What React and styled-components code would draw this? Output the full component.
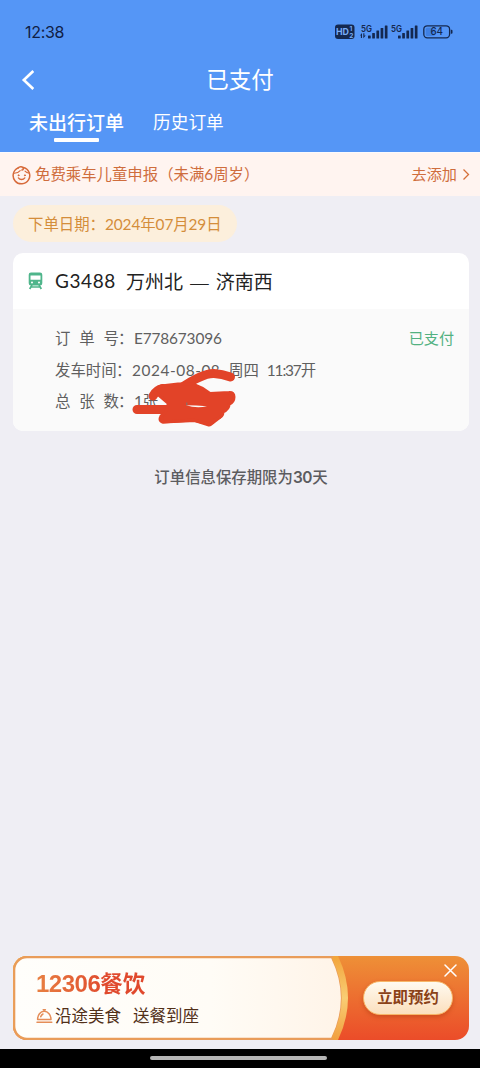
import React from 'react';
import styled, { createGlobalStyle } from 'styled-components';

const GlobalStyle = createGlobalStyle`
  * {
    box-sizing: border-box;
  }

  body {
    margin: 0;
    background: #efeef4;
    font-family: Lato, "Noto Sans CJK SC", sans-serif;
  }

  svg {
    display: block;
    flex: none;
  }
`;

const orders = [
  {
    id: 'E778673096',
    train: 'G3488',
    from: '万州北',
    to: '济南西',
    status: '已支付',
    date: '2024-08-08',
    weekday: '周四',
    time: '11:37',
    count: '1张',
  },
];

const SignalIcon = ({ roaming }) => (
  <svg width="29" height="16" viewBox="0 0 29 16" fill="#14284f">
    <text x="1" y="7.6" fontSize="9" fontWeight="600" fontFamily="Inter" textLength="11" lengthAdjust="spacingAndGlyphs">5G</text>
    {roaming && <path d="M0 11.5 2 9v5H.9v-2.500H0zM3.300 9.200h1.100v2.300h1.400L3.300 14.300z" />}
    <rect x="8" y="11.500" width="2.700" height="3" rx=".5" />
    <rect x="12.200" y="9" width="2.700" height="5.500" rx=".5" />
    <rect x="16.400" y="6.500" width="2.700" height="8" rx=".5" />
    <rect x="20.600" y="4" width="2.700" height="10.500" rx=".5" />
    <rect x="24.800" y="1.500" width="2.700" height="13" rx=".5" />
  </svg>
);

const HdIcon = () => (
  <svg width="20" height="16" viewBox="0 0 20 16">
    <rect x="0" y=".5" width="19.500" height="14.500" rx="3" fill="#14284f" />
    <g fill="#78adf8" fontFamily="Inter" fontWeight="700">
      <text x="1" y="11.200" fontSize="9.500" textLength="13" lengthAdjust="spacingAndGlyphs">HD</text>
      <text x="14.500" y="7.100" fontSize="6.500">1</text>
      <text x="14.300" y="13.500" fontSize="6.500">2</text>
    </g>
  </svg>
);

const BatteryIcon = () => (
  <svg width="31" height="14" viewBox="0 0 31 14">
    <rect x="2.800" y="2.800" width="9" height="8.200" rx="1.500" fill="#3f80e4" />
    <rect x=".8" y=".8" width="25.800" height="12" rx="3.500" fill="none" stroke="#14284f" strokeWidth="1.300" />
    <path d="M27.800 4.800h.7q1 0 1 1v2q0 1-1 1h-.7z" fill="#14284f" />
    <text x="13.700" y="10.400" textAnchor="middle" fontSize="9.800" fontWeight="500" fontFamily="Inter" fill="#14284f">64</text>
  </svg>
);

const ChildIcon = () => (
  <svg width="20" height="20" viewBox="0 0 20 20" fill="none" stroke="#d76a3a" strokeWidth="1.500" strokeLinecap="round">
    <path d="M6.200 2.900A8.300 8.300 0 1 0 11.500 2.500" />
    <path d="M6.200 2.900C7.500 1.600 9.800 1.400 10.800 2.400c1 1.100.4 2.700-.9 2.700" />
    <path d="M2.300 8.200C5 8.100 7 7.200 8.200 5.700M13 6.200c.9 1.100 2.300 1.800 4.400 2" strokeWidth="1.100" />
    <path d="M6.400 12.900c1.500 2.100 4.900 2.100 6.400 0" strokeWidth="1.300" />
    <circle cx="6.500" cy="10.300" r=".5" fill="#d76a3a" strokeWidth="1" />
    <circle cx="12.900" cy="10.300" r=".5" fill="#d76a3a" strokeWidth="1" />
  </svg>
);

const TrainIcon = () => (
  <svg width="15" height="18" viewBox="0 0 15 18">
    <path fillRule="evenodd" fill="#4fb58b" d="M3 .5h9A2.300 2.300 0 0 1 14.300 2.800v8.400a2.300 2.300 0 0 1-2.300 2.300H3A2.300 2.300 0 0 1 .7 11.200V2.800A2.300 2.300 0 0 1 3 .5zM2.500 3.500v4.300h10V3.500zM4 9.500a1 1 0 1 0 0 2 1 1 0 0 0 0-2zm7 0a1 1 0 1 0 0 2 1 1 0 0 0 0-2z" />
    <path d="M4 13 1.700 17M11 13l2.300 4M3.500 15h8" stroke="#4fb58b" strokeWidth="1.700" />
  </svg>
);

const DishIcon = () => (
  <svg width="17" height="16" viewBox="0 0 17 16" fill="none" stroke="#e58d58" strokeWidth="1.500" strokeLinecap="round" strokeLinejoin="round">
    <path d="M1.600 11.500C1.600 7 4.300 3.300 8.200 3.300s6.800 3.700 6.800 8.200zM1 14.200h14.800M7.200 1.700h2.200M4.700 8.700c.5-1.400 1.300-2.200 2.300-2.700" />
  </svg>
);

// marker strokes that cover the passenger details
const Scribble = () => (
  <ScribbleSvg width="106" height="62" viewBox="131 367 106 62">
    <g fill="none" stroke="#e24328" strokeWidth="9" strokeLinecap="round" strokeLinejoin="round">
      <path d="M181 388Q203 373 214 373.500Q222 374 230.500 377" />
      <path d="M153 396Q156 390 163 388.500" />
      <path d="M137 409.500H170M163 419 195 417.500 209 422 218 415" />
    </g>
    <path
      fill="#e24328"
      stroke="#e24328"
      strokeWidth="3"
      strokeLinejoin="round"
      d="M154 391 161 386 178 384 193 384 202 388 210 393.500 229 392.500Q234 392 234 397 234 402 229 404.500 229 409 223 412 223 417 217 418.500L209 424 193 420 163 422 161 416 165 413 168 406 168 403 161 397Z"
    />
    <path fill="#fafafa" d="M186 405.200Q196 408.500 207 406.300Q196 405.300 186 405.200Z" />
    <path fill="#777" d="M186.300 402.500h1v2.800h-1z" />
  </ScribbleSvg>
);

const BannerArt = () => (
  <BannerSvg width="456" height="84" viewBox="0 0 456 84">
    <defs>
      <linearGradient id="orange" x1="0" y1="0" x2="0" y2="1">
        <stop offset="0" stopColor="#ee9037" />
        <stop offset="1" stopColor="#eb4c29" />
      </linearGradient>
      <linearGradient id="cream" x1="0" y1="0" x2="1" y2="0">
        <stop offset="0" stopColor="#fffefb" />
        <stop offset=".6" stopColor="#fffcf6" />
        <stop offset="1" stopColor="#fff4e8" />
      </linearGradient>
      <linearGradient id="rim" x1="0" y1="0" x2="0" y2="1">
        <stop offset="0" stopColor="#f2a53c" />
        <stop offset=".5" stopColor="#f9cd74" />
        <stop offset="1" stopColor="#f1a03f" />
      </linearGradient>
    </defs>
    <rect width="456" height="84" rx="14" fill="url(#orange)" />
    <path d="M14 0H325Q345 42 325 84H14A14 14 0 0 1 0 70V14A14 14 0 0 1 14 0Z" fill="url(#rim)" />
    <path d="M14 1.200H319Q339 42 319 82.800H14A12.800 12.800 0 0 1 1.200 70V14A12.800 12.800 0 0 1 14 1.200Z" fill="url(#cream)" stroke="#e99c59" strokeWidth="2.200" />
    <path d="M320.500 1Q341 42 320.500 83" fill="none" stroke="url(#rim)" strokeWidth="4" />
  </BannerSvg>
);

const OrderCard = ({ order }) => (
  <Card>
    <CardHeader>
      <TrainIcon />
      <TrainNumber>{order.train}</TrainNumber>
      <Route>
        <span>{order.from}</span>
        <Dash>—</Dash>
        <span>{order.to}</span>
      </Route>
    </CardHeader>
    <CardBody>
      <Row>
        <Label $spread><i>订</i><i>单</i><i>号</i></Label>
        <Colon />
        <Value>{order.id}</Value>
        <Status>{order.status}</Status>
      </Row>
      <Row>
        <Label>发车时间</Label>
        <Colon />
        <Value $spacing={0.550}>{order.date}</Value>
        <Value>{order.weekday}</Value>
        <Value $spacing={-1.150}>{order.time}</Value>
        <span>开</span>
      </Row>
      <Row>
        <Label $spread><i>总</i><i>张</i><i>数</i></Label>
        <Colon />
        <Value>{order.count}</Value>
      </Row>
      <Scribble />
    </CardBody>
  </Card>
);

const App = () => (
  <Page>
    <GlobalStyle />
    <Header>
      <StatusBar>
        <Time>12:38</Time>
        <StatusIcons>
          <HdIcon />
          <SignalIcon roaming />
          <SignalIcon />
          <BatteryIcon />
        </StatusIcons>
      </StatusBar>
      <TitleBar>
        <svg width="14" height="20" viewBox="0 0 14 20" fill="none" stroke="#fff" strokeWidth="2.600">
          <path d="M13.300 1 3.800 10l9.500 9" />
        </svg>
        <Title>已支付</Title>
      </TitleBar>
      <Tabs>
        <Tab $active>未出行订单</Tab>
        <Tab>历史订单</Tab>
      </Tabs>
    </Header>

    <Notice>
      <ChildIcon />
      <NoticeText>免费乘车儿童申报（未满6周岁）</NoticeText>
      <NoticeLink>去添加</NoticeLink>
      <svg width="8" height="12" viewBox="0 0 8 12" fill="none" stroke="#d5703a" strokeWidth="1.300">
        <path d="M1.500 .5 6.500 5.500l-5 5" />
      </svg>
    </Notice>

    <Content>
      <DatePill>下单日期：<span>2024年07月29日</span></DatePill>
      {orders.map(order => <OrderCard key={order.id} order={order} />)}
      <Hint>订单信息保存期限为<b>30</b>天</Hint>
    </Content>

    <Banner>
      <BannerArt />
      <BannerText>
        <BannerTitle><span>12306</span>餐饮</BannerTitle>
        <BannerSub>
          <DishIcon />
          <span>沿途美食</span>
          <span>送餐到座</span>
        </BannerSub>
      </BannerText>
      <BookButton>立即预约</BookButton>
      <Close width="13" height="13" viewBox="0 0 13 13" stroke="#fff" strokeWidth="1.500" strokeLinecap="round">
        <path d="M1 1l11 11M12 1 1 12" />
      </Close>
    </Banner>

    <NavBar><HomeIndicator /></NavBar>
  </Page>
);

const Page = styled.div`
  display: flex;
  flex-direction: column;
  width: 480px;
  height: 1068px;
  overflow: hidden;
  background: #efeef4;
`;

const Header = styled.header`
  height: 152px;
  background: #5596f6;
  color: #fff;
`;

const StatusBar = styled.div`
  display: flex;
  align-items: center;
  justify-content: space-between;
  height: 64px;
  padding: 0 26px 0 25px;
`;

const Time = styled.span`
  font-family: Inter, sans-serif;
  font-size: 16px;
  font-weight: 400;
  letter-spacing: -0.300px;
  color: #102045;
`;

const StatusIcons = styled.div`
  display: flex;
  align-items: center;

  & > :first-child {
    margin-right: 5px;
  }

  & > :last-child {
    margin-left: 4px;
  }

  & > :nth-child(3) {
    margin-left: 1px;
  }
`;

const TitleBar = styled.div`
  display: flex;
  align-items: center;
  height: 32px;
  padding: 0 20px;
`;

const Title = styled.h1`
  flex: 1;
  margin: 0 14px 0 0;
  text-align: center;
  font-size: 22.500px;
  line-height: 32px;
  font-weight: 400;
`;

const Tabs = styled.nav`
  display: flex;
  align-items: flex-start;
  gap: 29px;
  padding: 12px 29px 0;
`;

const Tab = styled.div`
  display: flex;
  flex-direction: column;
  align-items: center;
  line-height: 30px;
  font-size: ${props => (props.$active ? 19 : 17.700)}px;
  font-weight: ${props => (props.$active ? 500 : 400)};

  &::after {
    content: '';
    display: ${props => (props.$active ? 'block' : 'none')};
    width: 45px;
    height: 4px;
    border-radius: 1px;
    background: #fff;
  }
`;

const Notice = styled.div`
  display: flex;
  align-items: center;
  height: 44px;
  padding: 0 10px 0 12px;
  border-top: 1px solid #fbfafd;
  background: #fff4f0;
  color: #cf6d3d;
  font-size: 15.400px;
  line-height: 24px;

  & > :last-child {
    margin-left: 5px;
  }
`;

const NoticeText = styled.span`
  flex: 1;
  margin-left: 3px;
  padding-bottom: 2px;
`;

const NoticeLink = styled.span`
  padding-bottom: 2px;
  font-size: 15.200px;
`;

const Content = styled.main`
  display: flex;
  flex: 1;
  flex-direction: column;
  align-items: stretch;
  padding: 9px 11px 0 13px;
`;

const DatePill = styled.div`
  align-self: flex-start;
  width: 224px;
  height: 37px;
  padding-left: 15px;
  border-radius: 19px;
  background: #fcefdc;
  color: #d48d3a;
  font-size: 15.400px;
  line-height: 38px;
  white-space: nowrap;

  span {
    letter-spacing: -0.1px;
  }
`;

const Card = styled.section`
  margin-top: 11px;
  overflow: hidden;
  border-radius: 10px;
  background: #fff;
`;

const CardHeader = styled.div`
  display: flex;
  align-items: center;
  height: 56px;
  padding: 0 0 0 15px;
  color: #222;
  font-size: 19px;
  line-height: 28px;
`;

const TrainNumber = styled.span`
  width: 71px;
  margin-left: 12px;
  letter-spacing: 0.600px;
`;

const Route = styled.span`
  display: flex;
  gap: 6px;
  font-family: "Noto Sans CJK SC", sans-serif;
`;

const Dash = styled.span`
  font-size: 23.500px;
  font-weight: 300;
`;

const CardBody = styled.div`
  position: relative;
  height: 122px;
  padding: 14px 15px 0 42px;
  background: #fafafa;
  color: #5f5f5f;
`;

const Row = styled.div`
  display: flex;
  height: 31.500px;
  font-size: 15.400px;
  line-height: 31px;
`;

const Label = styled.div`
  display: flex;
  justify-content: space-between;
  width: ${props => (props.$spread ? 64 : 62)}px;
  white-space: nowrap;

  i {
    font-style: normal;
  }
`;

const Colon = styled.span`
  width: 15px;

  &::before {
    content: '：';
    margin-left: -1px;
  }
`;

const Value = styled.span`
  letter-spacing: ${props => props.$spacing || -0.150}px;

  & + & {
    margin-left: 8px;
  }
`;

const Status = styled.span`
  margin-left: auto;
  color: #52b181;
  font-size: 15.100px;
`;

const ScribbleSvg = styled.svg`
  position: absolute;
  left: 118px;
  top: 58px;
`;

const Hint = styled.p`
  margin: 35px 0 0;
  color: #5c5c5f;
  font-family: Inter, "Noto Sans CJK SC", sans-serif;
  font-size: 15.400px;
  font-weight: 500;
  line-height: 24px;
  text-align: center;

  b {
    font-weight: 600;
    letter-spacing: -0.300px;
  }
`;

const Banner = styled.aside`
  position: relative;
  display: flex;
  align-items: center;
  justify-content: space-between;
  height: 84px;
  margin: 0 11px 9px 13px;
  padding: 0 16px 0 23px;
`;

const BannerSvg = styled.svg`
  position: absolute;
  left: 0;
  top: 0;
`;

const BannerText = styled.div`
  position: relative;
  padding-top: 2px;
`;

const BannerTitle = styled.div`
  width: max-content;
  background: linear-gradient(90deg, #e88042, #e0492d 65%);
  background-clip: text;
  color: transparent;
  font-family: "Liberation Sans", "Noto Sans CJK SC", sans-serif;
  font-size: 22.500px;
  font-weight: 700;
  line-height: 32px;

  span {
    font-size: 24px;
    letter-spacing: -0.500px;
  }
`;

const BannerSub = styled.div`
  display: flex;
  align-items: center;
  color: #523019;
  font-size: 16.500px;
  line-height: 30px;

  span {
    margin-left: 2px;
  }

  span + span {
    margin-left: 12px;
  }
`;

const BookButton = styled.button`
  position: relative;
  width: 90px;
  height: 34px;
  margin-bottom: 1px;
  padding: 0 0 3px;
  border: 1.500px solid #f7b668;
  border-radius: 17px;
  background: linear-gradient(#fffaf0, #fbdfbd);
  box-shadow: 0 2px 4px rgba(160, 50, 10, 0.4);
  color: #8b4218;
  font-family: "Noto Sans CJK SC", sans-serif;
  font-size: 15.400px;
  font-weight: 700;
  line-height: 28px;
`;

const Close = styled.svg`
  position: absolute;
  right: 12px;
  top: 8px;
`;

const NavBar = styled.footer`
  display: flex;
  justify-content: center;
  height: 19px;
  padding: 7px 3px 0 0;
  background: #000;
`;

const HomeIndicator = styled.div`
  width: 177px;
  height: 4px;
  border-radius: 2px;
  background: #b5b5b5;
`;

export default App;
